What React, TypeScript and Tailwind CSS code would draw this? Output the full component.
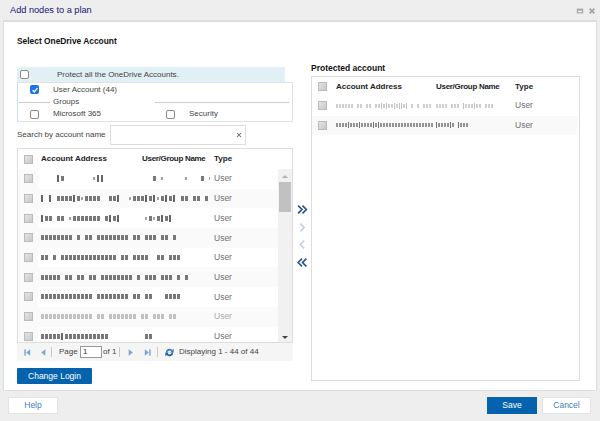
const leftRows = [
  ["    i:       ,!i            : .     .   : ,", "User"],
  ["i i ::::i:'::::  ::i  ':::i:i':i:i :: :: :", "User"],
  ["i:: :: '::::::: :i:i      ':.:i:i", "User"],
  [":::::::: : :: :::::::: :: ::: :: :", "User"],
  [":: : :::::::::::::: :: ::::  :: :::", "User"],
  ["::::: :: :: :: :::::::: : ::: ::: : :", "User"],
  ["::::::::::::: :::::::: :: ::   ::::", "User"],
  ["::::::::::::: :: ::::::: :: ::: ::", "User"],
  [":::::i:::::::::::         ::", "User"],
];

function Smudge({ text, faint, fine }: { text: string; faint?: boolean; fine?: boolean }) {
  return (
    <div className={`flex items-center h-[7px] overflow-hidden ${fine ? "blur-[0.35px]" : "blur-[0.6px]"} ${faint ? "opacity-40" : "opacity-90"}`}>
      {text.split("").map((c, i) =>
        fine ? (
          <span
            key={i}
            className={c === " " ? "w-[3px] shrink-0" : c === "i" ? "w-[1px] h-[6px] mr-[1px] shrink-0 bg-[#666666]" : "w-[2px] h-[4px] mr-[1px] shrink-0 bg-[#888888]"}
          />
        ) : (
          <span
            key={i}
            className={
              c === " "
                ? "w-[4px] shrink-0"
                : c === "i" || c === "!"
                ? "w-[2px] h-[7px] mr-[2px] shrink-0 bg-[#555555]"
                : c === ":"
                ? "w-[2.5px] h-[5px] mr-[1.5px] shrink-0 bg-[#6a6a6a]"
                : "w-[2px] h-[3px] mr-[2px] shrink-0 bg-[#999999]"
            }
          />
        )
      )}
    </div>
  );
}

function GridCheck() {
  return <span className="block w-[9px] h-[9px] border border-[#bbbbbb] bg-[linear-gradient(135deg,#e4e4e4,#c8c8c8)]" />;
}

function Box({ checked }: { checked?: boolean }) {
  return checked ? (
    <span className="flex items-center justify-center w-[9px] h-[9px] rounded-[2px] bg-[#1a73e8]">
      <svg viewBox="0 0 10 10" className="w-[8px] h-[8px]">
        <path d="M2 5.2 4.2 7.5 8 2.6" fill="none" stroke="#fff" strokeWidth="1.7" />
      </svg>
    </span>
  ) : (
    <span className="block w-[9px] h-[9px] rounded-[2px] border border-[#8a8a8a] bg-white" />
  );
}

function TableHead({ left }: { left?: boolean }) {
  return (
    <div className={`flex items-center ${left ? "h-[20px]" : "h-[19px]"} shrink-0 text-[8px] font-bold text-[#222222] whitespace-nowrap`}>
      <div className="w-[20px] flex justify-center"><GridCheck /></div>
      <div className={left ? "w-[104px] pl-[3px]" : "w-[104px] pl-[4px]"}>Account Address</div>
      <div className={left ? "w-[72px] tracking-[-0.3px]" : "w-[79px] tracking-[-0.3px]"}>User/Group Name</div>
      <div>Type</div>
    </div>
  );
}

function Chevron({ dbl, dir, light }: { dbl?: boolean; dir: "l" | "r"; light?: boolean }) {
  const color = light ? "#c3cfe2" : "#2a5291";
  const p = (x: number) =>
    dir === "r" ? `M${x} 1.5 L${x + 3.5} 5 L${x} 8.5` : `M${x + 3.5} 1.5 L${x} 5 L${x + 3.5} 8.5`;
  return (
    <svg viewBox="0 0 10 10" className="w-[11px] h-[11px]">
      {dbl ? (
        <>
          <path d={p(1)} fill="none" stroke={color} strokeWidth="1.5" />
          <path d={p(5)} fill="none" stroke={color} strokeWidth="1.5" />
        </>
      ) : (
        <path d={p(3)} fill="none" stroke={color} strokeWidth="1.5" />
      )}
    </svg>
  );
}

function PagerIcon({ kind }: { kind: "first" | "prev" | "next" | "last" }) {
  const paths: Record<string, React.ReactNode> = {
    first: <><rect x="1.5" y="1.5" width="1.6" height="7" fill="#7ba3d6" /><path d="M8 1.5V8.5L3.5 5Z" fill="#7ba3d6" /></>,
    prev: <path d="M7 1.5V8.5L2.5 5Z" fill="#7ba3d6" />,
    next: <path d="M3 1.5V8.5L7.5 5Z" fill="#7ba3d6" />,
    last: <><rect x="6.9" y="1.5" width="1.6" height="7" fill="#7ba3d6" /><path d="M2 1.5V8.5L6.5 5Z" fill="#7ba3d6" /></>,
  };
  return <svg viewBox="0 0 10 10" className="w-[9px] h-[9px] shrink-0">{paths[kind]}</svg>;
}

const Sep = () => <span className="block w-px h-[10px] bg-[#c8c8c8] shrink-0" />;

export default function App() {
  return (
    <div className="w-[600px] h-[421px] flex flex-col bg-[#eeeeee] overflow-hidden text-[#444444] text-[8px] whitespace-nowrap font-['Liberation_Sans',Arial,sans-serif]">
      <div className="h-[20px] shrink-0 flex items-center justify-between pl-[10px] pr-[4px] pt-[1px]">
        <span className="text-[#14146e] text-[9.2px]">Add nodes to a plan</span>
        <div className="flex items-center gap-[4px]">
          <svg viewBox="0 0 10 10" className="w-[8px] h-[8px]">
            <rect x="1" y="2" width="8" height="6" fill="#a5a5a5" />
            <rect x="2.5" y="4.5" width="5" height="2" fill="#eeeeee" />
          </svg>
          <svg viewBox="0 0 10 10" className="w-[8px] h-[8px]">
            <path d="M2 2 8 8M8 2 2 8" stroke="#a0a0a0" strokeWidth="2" />
          </svg>
        </div>
      </div>

      <div className="mx-[3px] h-[371px] shrink-0 bg-white border-t-2 border-x border-b border-[#dddddd] flex pl-[13px] pr-[16px]">
        <div className="w-[276px] shrink-0 flex flex-col">
          <div className="font-bold text-[#111111] mt-[13px] h-[12px] leading-[12px] text-[8.4px]">Select OneDrive Account</div>
          <div className="mt-[20px] h-[15px] w-[268px] bg-[#e1f0f4] flex items-center pl-[3px]">
            <Box />
            <span className="ml-[28px]">Protect all the OneDrive Accounts.</span>
          </div>
          <div className="h-[40px] border border-[#e2e2e2] border-l-[#c8dbe8] flex flex-col">
            <div className="h-[13px] flex items-center pl-[12px]">
              <Box checked />
              <span className="ml-[14px]">User Account (44)</span>
            </div>
            <div className="h-[12px] flex items-center pl-[1px]">
              <span className="w-[31px] h-px bg-[#cccccc]" />
              <span className="ml-[3px] w-[102px]">Groups</span>
              <span className="w-[134px] h-px bg-[#cccccc]" />
            </div>
            <div className="h-[12px] flex items-center pl-[12px]">
              <Box />
              <span className="ml-[14px] w-[113px]">Microsoft 365</span>
              <Box />
              <span className="ml-[14px]">Security</span>
            </div>
          </div>
          <div className="mt-[3px] h-[20px] flex items-center">
            <span className="w-[93px]">Search by account name</span>
            <div className="w-[136px] h-[20px] border border-[#dddddd] flex items-center justify-end pr-[2px]">
              <svg viewBox="0 0 10 10" className="w-[8px] h-[8px]">
                <path d="M2.5 2.5 7.5 7.5M7.5 2.5 2.5 7.5" stroke="#666666" strokeWidth="1.3" />
              </svg>
            </div>
          </div>
          <div className="mt-[3px] h-[195px] border border-[#dddddd] flex flex-col">
            <TableHead left />
            <div className="flex-1 flex min-h-0 overflow-hidden">
              <div className="flex-1 flex flex-col">
                {leftRows.map(([t, u], i) => (
                  <div key={i} className={`h-[19.7px] shrink-0 flex items-center ${i % 2 ? "bg-[#fafafa]" : "bg-white"}`}>
                    <div className="w-[20px] h-full flex justify-center items-center bg-[#fafafa]"><GridCheck /></div>
                    <div className="w-[176px] pl-[3px] pr-[4px] overflow-hidden"><Smudge text={t} faint={i === 7} /></div>
                    <div className={`text-[8.5px] ${i === 7 ? "text-[#aaaaaa]" : "text-[#6f6f6f]"}`}>{u}</div>
                  </div>
                ))}
              </div>
              <div className="w-[14px] shrink-0 bg-[#f1f1f1] flex flex-col items-center">
                <span className="mt-[6px] border-x-[3px] border-x-transparent border-b-[3px] border-b-[#b0b0b0]" />
                <span className="mt-[4px] w-[12px] h-[30px] bg-[#c1c1c1]" />
                <span className="mt-auto mb-[3px] border-x-[3px] border-x-transparent border-t-[3px] border-t-[#444444]" />
              </div>
            </div>
          </div>
          <div className="h-[18px] bg-[#f5f5f5] flex items-center pl-[6px]">
            <PagerIcon kind="first" />
            <span className="w-[7px] shrink-0" />
            <PagerIcon kind="prev" />
            <span className="w-[3px] shrink-0" />
            <Sep />
            <span className="ml-[7px] w-[21px]">Page</span>
            <div className="w-[22px] h-[12px] bg-white border border-[#999999] pl-[2px] leading-[10px] text-[#333333]">1</div>
            <span className="ml-[1px] w-[16px]">of 1</span>
            <Sep />
            <span className="w-[6px] shrink-0" />
            <PagerIcon kind="next" />
            <span className="w-[8px] shrink-0" />
            <PagerIcon kind="last" />
            <span className="w-[5px] shrink-0" />
            <Sep />
            <svg viewBox="0 0 12 12" className="w-[11px] h-[11px] shrink-0 ml-[6px]">
              <path d="M2 6A4 4 0 0 1 9 3.2L10.5 2V6H6.8L8 4.6A2.6 2.6 0 0 0 3.6 6Z" fill="#3a7cc4" />
              <path d="M10 6A4 4 0 0 1 3 8.8L1.5 10V6H5.2L4 7.4A2.6 2.6 0 0 0 8.4 6Z" fill="#1f5ea8" />
            </svg>
            <span className="ml-[4px]">Displaying 1 - 44 of 44</span>
          </div>
          <button className="mt-[7px] w-[75px] h-[16px] bg-[#0563ae] text-white text-[8.5px] rounded-[1px]">Change Login</button>
        </div>

        <div className="w-[18px] shrink-0 flex flex-col items-center pt-[182px]">
          <div className="flex flex-col gap-[6.5px] ml-[1px]">
            <Chevron dbl dir="r" />
            <Chevron dir="r" light />
            <Chevron dir="l" light />
            <Chevron dbl dir="l" />
          </div>
        </div>

        <div className="flex-1 flex flex-col">
          <div className="font-bold text-[#111111] mt-[40px] h-[12px] leading-[12px] text-[8.5px]">Protected account</div>
          <div className="h-[305px] border border-[#dddddd] flex flex-col mt-[2px]">
            <TableHead />
            <div className="h-[19.5px] flex items-center mr-[2px]">
              <div className="w-[20px] flex justify-center"><GridCheck /></div>
              <div className="w-[104px] pl-[4px] pr-[2px] overflow-hidden"><Smudge fine text={":::::: :: :: ::i:i::i:ii:i : : ::: "} faint /></div>
              <div className="w-[79px] pr-[6px] overflow-hidden"><Smudge fine text={":::: ::: i:::i:: :::"} faint /></div>
              <div className="text-[8.5px] text-[#6f6f6f]">User</div>
            </div>
            <div className="h-[19.5px] flex items-center bg-[#f9f9f9] mr-[2px]">
              <div className="w-[20px] flex justify-center"><GridCheck /></div>
              <div className="w-[104px] pl-[4px] pr-[2px] overflow-hidden"><Smudge fine text={"::::i:::i::::i:i::::::::::::::::::"} /></div>
              <div className="w-[79px] pr-[6px] overflow-hidden"><Smudge fine text={"i::::i: i:::"} /></div>
              <div className="text-[8.5px] text-[#6f6f6f]">User</div>
            </div>
          </div>
        </div>
      </div>

      <div className="h-[30px] shrink-0 flex items-center pl-[8px] pr-[9px] pb-[2px] text-[8.5px]">
        <button className="w-[50px] h-[17px] bg-white border border-[#e2e2e2] text-[#3b82b8]">Help</button>
        <span className="flex-1" />
        <button className="w-[50px] h-[17px] bg-[#0563ae] text-white">Save</button>
        <button className="ml-[5px] w-[49px] h-[17px] bg-white border border-[#e2e2e2] text-[#3b82b8]">Cancel</button>
      </div>
    </div>
  );
}
